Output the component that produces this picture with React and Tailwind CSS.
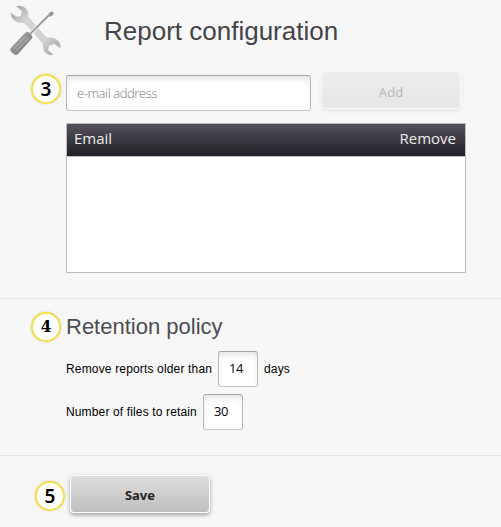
import React from "react";

const inputStyle =
  "block rounded-[3px] border border-[#c6c6c6] border-t-[#a3a3a3] border-x-[#b8b8b8] bg-white outline-none shadow-[inset_0_5px_8px_-4px_rgba(0,0,0,0.16)]";

function Step({ children, className }) {
  return (
    <div
      className={`flex h-[30px] w-[30px] shrink-0 items-center justify-center rounded-full bg-white leading-none text-black shadow-[inset_0_0_0_1.8px_#f6dc3a,0_0_2px_rgba(150,140,90,0.5)] ${className}`}
    >
      {children}
    </div>
  );
}

const sansDigit = "font-['Noto_Sans',sans-serif] text-[19px] font-semibold";
const slabDigit = "pb-px font-['DejaVu_Serif_Condensed','DejaVu_Serif',serif] text-[17px] font-bold";

function ToolsIcon() {
  return (
    <svg width="70" height="62" viewBox="0 0 70 62" className="shrink-0" aria-hidden="true">
      <defs>
        <linearGradient id="steel" x1="0" y1="0" x2="1" y2="1">
          <stop offset="0" stopColor="#999" />
          <stop offset="0.3" stopColor="#d6d6d6" />
          <stop offset="0.7" stopColor="#d2d2d2" />
          <stop offset="1" stopColor="#999" />
        </linearGradient>
        <linearGradient id="grip" x1="0" y1="0" x2="1" y2="1">
          <stop offset="0" stopColor="#a9a9a9" />
          <stop offset="1" stopColor="#777" />
        </linearGradient>
      </defs>
      <path
        d="M16.5 6.6C21 4.8 26.5 7.6 27.9 12.3C28.4 14.3 27.4 16 28.2 17.4L46.2 37.4C47.6 38.8 50.5 37.6 53 38.2C57.5 39.3 60.8 43.2 60.2 47.8L54.5 43.8L48.8 45.5L47.8 50.2L53 54.6C48 56 43.3 52 43.3 46.7C43.4 44.7 43.6 43.7 42.3 42.3L25 23.3C23.6 21.8 21.7 22.8 19 22.3C14.3 21.4 10.8 17.8 11 13.3L17.4 17.2L21.2 15.8L22.2 11.3Z"
        fill="url(#steel)"
        stroke="#b9b9b9"
        strokeWidth="0.5"
      />
      <path d="M30 34L48.5 15.7" stroke="#f0f0f0" strokeWidth="3.2" />
      <path d="M29 35L48.5 15.7" stroke="#949494" strokeWidth="1.7" />
      <path d="M48 16.3L48.5 13.6L51.3 11.4L53.4 12L53.8 13.5L52.2 15.8L49.6 16.8Z" fill="#999" />
      <path
        d="M25.5 32.5Q28 31.2 30 33.2L32 35.5Q33 37.5 31.5 39L18 54Q16 55.8 13.6 54L10.5 51Q9.6 49.3 11 47.8Z"
        fill="url(#grip)"
      />
      <path d="M14 48.8L26 36M16.4 50.6L28.4 38" stroke="#bcbcbc" strokeWidth="0.9" />
    </svg>
  );
}

export default function App() {
  return (
    <main className="flex h-[527px] w-[501px] flex-col overflow-hidden bg-[#f7f7f7] font-['Liberation_Sans',Arial,sans-serif] text-black">
      <header className="flex h-[71px] items-start">
        <ToolsIcon />
        <h1 className="mt-[15px] ml-[34px] text-[26px] leading-8 whitespace-nowrap text-[#444448]">
          Report configuration
        </h1>
      </header>

      <section className="h-[227px]">
        <div className="flex h-10 items-start pl-[31px]">
          <Step className={`mt-[3px] ${sansDigit}`}>3</Step>
          <input
            aria-label="e-mail address"
            placeholder="e-mail address"
            className={`${inputStyle} mt-1 ml-[5px] h-9 w-[245px] px-2.5 font-['Open_Sans',sans-serif] text-[13px] font-light tracking-[-0.4px] placeholder:text-[#7c7c7c]`}
          />
          <button
            disabled
            className="ml-2.5 h-[38px] w-[140px] rounded-[4px] border border-[#fafafa] bg-linear-to-b from-[#eeeeee] to-[#e6e6e6] pt-1.5 font-['Noto_Sans',sans-serif] text-[13px] text-[#b9b9b9] shadow-[0_2px_4px_rgba(0,0,0,0.07)]"
          >
            Add
          </button>
        </div>
        <div className="mt-3 ml-[66px] h-[150px] w-[400px] border border-[#bdbdbd] bg-white">
          <div className="flex h-[33px] items-center justify-between border-b border-[#bdbdbd] bg-linear-to-b from-[#56525c] to-[#242028] pr-[9px] pb-[3px] pl-[7px] font-['Open_Sans',sans-serif] text-[15px] text-[#ececec]">
            <span>Email</span>
            <span>Remove</span>
          </div>
        </div>
      </section>

      <section className="h-[157px] border-t border-[#e4e4e4]">
        <div className="flex items-start pt-[13px] pl-[31px]">
          <Step className={slabDigit}>4</Step>
          <h2 className="ml-[5px] text-[22px] leading-[30px] text-[#4d4d51]">Retention policy</h2>
        </div>
        <div className="mt-[9px] ml-[66px] flex h-9 items-center text-[12px]">
          <label htmlFor="days" className="w-[146px] tracking-[0.16px] whitespace-nowrap">
            Remove reports older than
          </label>
          <input
            id="days"
            defaultValue="14"
            className={`${inputStyle} mr-1.5 ml-1.5 h-9 w-10 pr-1 pb-0.5 pl-2.5 font-['Open_Sans',sans-serif] text-[13px] tracking-[-0.5px]`}
          />
          <span className="tracking-[0.16px]">days</span>
        </div>
        <div className="mt-[7px] ml-[66px] flex h-9 items-center text-[12px]">
          <label htmlFor="files" className="w-[131px] tracking-[0.14px] whitespace-nowrap">
            Number of files to retain
          </label>
          <input
            id="files"
            defaultValue="30"
            className={`${inputStyle} ml-1.5 h-9 w-10 pr-1 pb-0.5 pl-2.5 font-['Open_Sans',sans-serif] text-[13px] tracking-[-0.5px]`}
          />
        </div>
      </section>

      <footer className="flex grow items-start border-t border-[#e4e4e4] pt-[19px] pl-[35px]">
        <Step className={`mt-1.5 ${sansDigit}`}>5</Step>
        <button className="ml-[5px] h-[38px] w-[140px] rounded-[4px] border border-white bg-linear-to-b from-[#dfdedd] to-[#c0bfc0] pt-1 font-['Noto_Sans',sans-serif] text-[13px] font-bold text-[#222] shadow-[0_2px_4px_rgba(0,0,0,0.35)]">
          Save
        </button>
      </footer>
    </main>
  );
}
